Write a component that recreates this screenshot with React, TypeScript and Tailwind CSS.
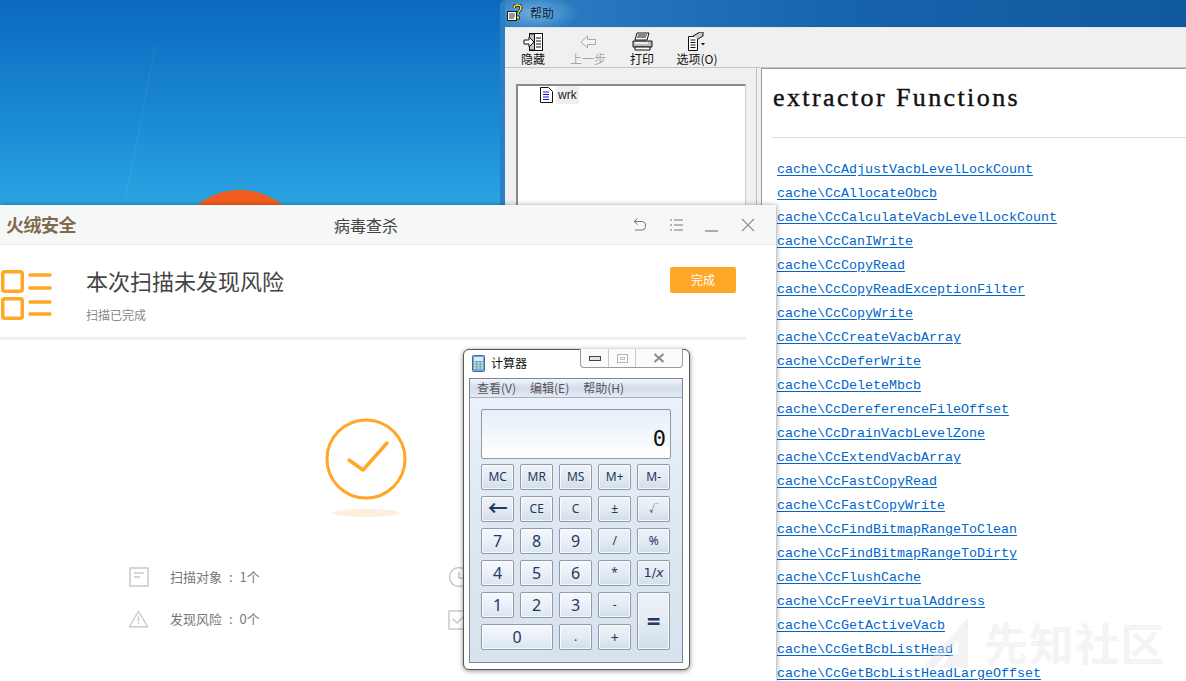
import React from "react";

const links = ["CcAdjustVacbLevelLockCount","CcAllocateObcb","CcCalculateVacbLevelLockCount","CcCanIWrite","CcCopyRead","CcCopyReadExceptionFilter","CcCopyWrite","CcCreateVacbArray","CcDeferWrite","CcDeleteMbcb","CcDereferenceFileOffset","CcDrainVacbLevelZone","CcExtendVacbArray","CcFastCopyRead","CcFastCopyWrite","CcFindBitmapRangeToClean","CcFindBitmapRangeToDirty","CcFlushCache","CcFreeVirtualAddress","CcGetActiveVacb","CcGetBcbListHead","CcGetBcbListHeadLargeOffset"];

const cjk = "font-['Noto_Sans_CJK_SC','Noto_Sans',sans-serif]";

function ToolBtn({ label, disabled, children, w }: { label: string; disabled?: boolean; children: React.ReactNode; w: string }) {
  return (
    <div className={`flex flex-col items-center ${w}`}>
      <div className="h-[19px] flex items-center justify-center">{children}</div>
      <span className={`text-[12px] leading-[15px] ${disabled ? "text-[#a8a8a8]" : "text-[#111]"}`}>{label}</span>
    </div>
  );
}

function HelpWindow() {
  return (
    <div className={`absolute left-[500px] top-0 right-0 h-[300px] flex flex-col rounded-tl-md bg-gradient-to-r from-[#2c7fc4] via-[#1763ac] to-[#11599f] pl-[5px] ${cjk}`}>
      <div className="h-[27px] flex items-center gap-[6px] pl-[1px] pb-[2px] shrink-0 bg-[radial-gradient(ellipse_45px_18px_at_30px_13px,rgba(170,215,245,0.55),transparent)]">
        <svg width="18" height="18" viewBox="0 0 18 18">
          <path d="M1.500 7.500h9v9h-9z" fill="#fff" stroke="#111" />
          <path d="M3 10h6M3 12h6M3 14h5" stroke="#333" />
          <path d="M8 4c0-4 7-4 7 0 0 3-3 2.500-3 6" fill="none" stroke="#111" strokeWidth="3" />
          <path d="M8 4c0-4 7-4 7 0 0 3-3 2.500-3 6" fill="none" stroke="#f7ea2a" strokeWidth="1.500" />
          <rect x="10.500" y="12" width="3" height="3" fill="#f7ea2a" stroke="#111" strokeWidth="0.700" />
        </svg>
        <span className="text-[12px] text-[#10243c]">帮助</span>
      </div>
      <div className="flex-1 flex flex-col bg-[#f0f0f0] min-h-0">
        <div className="h-[41px] shrink-0 border-b border-[#c4c4c4] flex items-start pt-[4px] pl-[7px] border-t border-t-[#dfe8f0]">
          <ToolBtn label="隐藏" w="w-[42px]">
            <svg width="20" height="18" viewBox="0 0 20 18">
              <rect x="6.500" y="0.500" width="13" height="17" fill="#fff" stroke="#111" />
              <rect x="6.500" y="1" width="5" height="16" fill="#c2c2c2" stroke="#111" />
              <path d="M13 5h5M13 8h5M13 11h5M13 14h5" stroke="#111" />
              <path d="M1 7h5V4l5 5-5 5v-3H1z" fill="#fff" stroke="#111" />
            </svg>
          </ToolBtn>
          <ToolBtn label="上一步" disabled w="w-[68px]">
            <svg width="17" height="14" viewBox="0 0 17 14"><path d="M7.500 1 1 7l6.500 6V9.500h8v-5h-8z" fill="#f4f4f4" stroke="#a8a8a8" /></svg>
          </ToolBtn>
          <ToolBtn label="打印" w="w-[40px]">
            <svg width="21" height="19" viewBox="0 0 21 19">
              <path d="M5 1h12l-2 7H3z" fill="#fff" stroke="#111" />
              <path d="M6 3h9M5 5h9" stroke="#111" />
              <path d="M1 9h19v6H1z" fill="#bdbdbd" stroke="#111" />
              <path d="M3 15h15v3H3z" fill="#fff" stroke="#111" />
              <path d="M3 11h13" stroke="#fff" strokeWidth="1.500" />
            </svg>
          </ToolBtn>
          <ToolBtn label="选项(O)" w="w-[70px]">
            <svg width="20" height="19" viewBox="0 0 20 19">
              <path d="M1.500 4.500h9v14h-9z" fill="#fff" stroke="#111" />
              <path d="M3.500 8h5M3.500 10.500h5M3.500 13h5M3.500 15.500h5" stroke="#111" />
              <path d="M6 4 13 0h3v4l-5 3" fill="#ccc" stroke="#111" />
              <path d="m14 11 4 0-2 2.500z" fill="#111" />
            </svg>
          </ToolBtn>
        </div>
        <div className="flex-1 flex min-h-0">
          <div className="w-[251px] shrink-0 pt-[16px] pl-[11px] pr-[10px]">
            <div className="h-full bg-white border-t-2 border-l-2 border-r border-t-[#8a8a8a] border-l-[#8a8a8a] border-r-[#cfcfcf] pl-[22px] flex items-start gap-[3px]">
              <svg width="13" height="16" viewBox="0 0 13 16" className="mt-[1px]">
                <path d="M.5.500h8l4 4v11H.500z" fill="#fff" stroke="#111" />
                <path d="M3 5h6M3 7.500h6M3 10h6M3 12.500h6" stroke="#1616c8" />
              </svg>
              <span className="bg-[#efefef] px-[2px] text-[12px] leading-[18px] text-[#222] font-['Liberation_Sans',sans-serif]">wrk</span>
            </div>
          </div>
          <div className="w-[5px] shrink-0 border-l border-[#bdbdbd]" />
          <div className="flex-1 bg-white border-l border-t border-[#9a9a9a]" />
        </div>
      </div>
    </div>
  );
}

function Article() {
  return (
    <div className="absolute left-[762px] top-[69px] right-0 bottom-0 bg-white overflow-hidden pl-[10px] font-['Liberation_Mono',monospace]">
      <h1 className="h-[69px] pt-[15px] pl-[1px] text-[26px] leading-[28px] font-normal tracking-[2.400px] [-webkit-text-stroke:0.4px_#111] text-[#111] border-b border-[#d0dcf0] font-['Liberation_Serif',serif]">extractor Functions</h1>
      <ul className="pt-[20px] pl-[5px]">
        {links.map((l) => (
          <li key={l} className="h-[24px] text-[13.33px] leading-[24px]">
            <span className="text-[#0066cc] underline underline-offset-2">{"cache\\" + l}</span>
          </li>
        ))}
      </ul>
    </div>
  );
}

function Watermark() {
  return (
    <div className={`absolute left-[920px] top-[615px] flex items-center gap-[14px] opacity-40 pointer-events-none ${cjk}`}>
      <svg width="50" height="54" viewBox="0 0 50 54"><path d="M48 3v50H22l8-14h8V26L14 53H2z" fill="#e2e2e2" /></svg>
      <span className="text-[44px] leading-[54px] font-bold tracking-[1.500px] text-[#e4e4e4]">先知社区</span>
    </div>
  );
}

function StatRow({ icon, text }: { icon: React.ReactNode; text: string }) {
  return (
    <div className="flex items-center h-[22px] gap-[21px]">
      <div className="w-[21px] flex justify-center">{icon}</div>
      <span className="text-[13px] text-[#777] [word-spacing:4px]">{text}</span>
    </div>
  );
}

function ScanWindow() {
  return (
    <div className={`absolute left-0 top-[205px] w-[776px] h-[476px] bg-white shadow-[1px_0_5px_rgba(0,0,0,0.35)] flex flex-col ${cjk}`}>
      <header className="h-[40px] shrink-0 bg-[#f6f8f7] border-b border-[#ececec] flex items-center relative">
        <span className="pl-[6px] text-[18px] font-bold text-[#7f6b4c] tracking-[-0.500px]">火绒安全</span>
        <span className="absolute left-[334px] text-[16px] text-[#444]">病毒查杀</span>
        <div className="ml-auto flex items-center gap-[20px] pr-[20px]">
          <svg width="16" height="16" viewBox="0 0 16 16" fill="none" stroke="#777" strokeWidth="1">
            <path d="M5.500 1.500 2 4.500l3.500 3" /><path d="M2.500 4.500H10a3.500 3.500 0 0 1 3.500 3.500v1.500A3.500 3.500 0 0 1 10 13H3" />
          </svg>
          <svg width="16" height="16" viewBox="0 0 16 16" fill="none" stroke="#777" strokeWidth="1">
            <path d="M2 3h2M6 3h9M2 8h2M6 8h9M2 13h2M6 13h9" />
          </svg>
          <svg width="16" height="16" viewBox="0 0 16 16" fill="none" stroke="#777" strokeWidth="1.200"><path d="M1 14h13" /></svg>
          <svg width="16" height="16" viewBox="0 0 16 16" fill="none" stroke="#9a8f8f" strokeWidth="1.200"><path d="m2 2 12 12M14 2 2 14" /></svg>
        </div>
      </header>
      <section className="h-[95px] shrink-0 w-[746px] border-b-[3px] border-[#f0f0f0] flex relative">
        <svg width="54" height="52" viewBox="0 0 54 52" className="mt-[25px] shrink-0" fill="none" stroke="#ffa726">
          <rect x="2.750" y="1.750" width="19.500" height="19.500" rx="2" strokeWidth="3.500" />
          <rect x="2.750" y="28.750" width="19.500" height="19.500" rx="2" strokeWidth="3.500" />
          <path d="M30 5h20M30 18h20M30 32h20M30 44h20" strokeWidth="3.500" strokeLinecap="round" />
        </svg>
        <div className="ml-[32px] pt-[19px]">
          <h2 className="text-[22px] leading-[32px] font-normal text-[#444]">本次扫描未发现风险</h2>
          <p className="text-[12px] leading-[18px] mt-[10px] text-[#888]">扫描已完成</p>
        </div>
        <button className="absolute left-[670px] top-[22px] w-[66px] h-[26px] bg-[#ffa726] rounded-[2px] text-[12px] text-white">完成</button>
      </section>
      <div className="flex flex-col items-center w-[732px] pt-[77px]">
        <svg width="84" height="84" viewBox="0 0 84 84" fill="none" stroke="#ffa726">
          <circle cx="42" cy="42" r="39" strokeWidth="3" />
          <path d="M25 43l14 10 24-27" strokeWidth="3.500" strokeLinecap="round" strokeLinejoin="round" />
        </svg>
        <div className="w-[68px] h-[8px] mt-[8px] rounded-[50%] bg-[#fdeedd]" />
      </div>
      <div className="pl-[128px] pt-[49px] flex flex-col gap-[20px]">
        <StatRow text="扫描对象 : 1个" icon={
          <svg width="20" height="20" viewBox="0 0 20 20" fill="none" stroke="#c9c9c9" strokeWidth="1.500"><rect x="1" y="1" width="18" height="18" /><path d="M5 6h10M5 10h6" /></svg>
        } />
        <StatRow text="发现风险 : 0个" icon={
          <svg width="23" height="20" viewBox="0 0 23 20" fill="none" stroke="#c9c9c9" strokeWidth="1.500"><path d="M11.500 1.500 1.500 18.500h20z" strokeLinejoin="round" /><path d="M11.500 7v6M11.500 14.500v1.500" /></svg>
        } />
      </div>
      <svg width="24" height="20" viewBox="0 0 24 20" fill="none" stroke="#c9c9c9" strokeWidth="1.500" className="absolute left-[448px] top-[362px]"><circle cx="11" cy="10" r="9.500" /><path d="M11 5v6h5" /></svg>
      <svg width="24" height="20" viewBox="0 0 24 20" fill="none" stroke="#c9c9c9" strokeWidth="1.500" className="absolute left-[448px] top-[405px]"><rect x="1" y="1" width="18" height="18" /><path d="m5 9 4 4 7-7" /></svg>
    </div>
  );
}

type Key = { t: string; cls?: string; light?: boolean; text?: string };
const keys: Key[] = [
  { t: "MC", text: "text-[12px]" }, { t: "MR", text: "text-[12px]" }, { t: "MS", text: "text-[12px]" }, { t: "M+", text: "text-[12px]" }, { t: "M-", text: "text-[12px]" },
  { t: "←", text: "text-[20px] font-bold" }, { t: "CE", text: "text-[12px]" }, { t: "C", text: "text-[12px]" }, { t: "±", text: "text-[12px]" }, { t: "√", text: "text-[9px]" },
  { t: "7", light: true }, { t: "8", light: true }, { t: "9", light: true }, { t: "/", text: "text-[12px]" }, { t: "%", text: "text-[12px]" },
  { t: "4", light: true }, { t: "5", light: true }, { t: "6", light: true }, { t: "*", text: "text-[12px]" }, { t: "1/x", text: "text-[13px] font-['DejaVu_Sans',sans-serif]" },
  { t: "1", light: true }, { t: "2", light: true }, { t: "3", light: true }, { t: "-", text: "text-[12px]" }, { t: "=", cls: "row-span-2", text: "text-[24px] font-bold" },
  { t: "0", cls: "col-span-2", light: true }, { t: ".", text: "text-[12px]" }, { t: "+", text: "text-[14px]" },
];

function Calculator() {
  return (
    <div className="absolute left-[463px] top-[349px] w-[227px] h-[321px] bg-white rounded-[6px] border border-[#555] shadow-[0_1px_5px_rgba(0,0,0,0.45)] flex flex-col font-['Noto_Sans','Noto_Sans_CJK_SC',sans-serif]">
      <div className="h-[28px] shrink-0 relative flex items-center pl-[8px] gap-[6px] pb-[2px]">
        <svg width="13" height="17" viewBox="0 0 13 17">
          <rect x="0.500" y="0.500" width="12" height="16" rx="1" fill="#6fa9dd" stroke="#3c6ea0" />
          <rect x="2" y="2" width="9" height="4" fill="#d9ecfb" />
          <path d="M2 8h2M5.500 8h2M9 8h2M2 10.500h2M5.500 10.500h2M9 10.500h2M2 13h2M5.500 13h2M9 13h2" stroke="#f4e5a6" strokeWidth="1.500" />
        </svg>
        <span className="text-[12px] text-[#111] font-['Noto_Sans_CJK_SC',sans-serif]">计算器</span>
        <div className="absolute left-[116px] top-[-1px] w-[103px] h-[19px] border border-t-0 border-[#9a9a9a] rounded-b-[4px] flex bg-[#fbfbfb]">
          <div className="w-[28px] border-r border-[#c8c8c8] flex items-center justify-center"><div className="w-[12px] h-[5px] border border-[#444] bg-[#dfe6ee]" /></div>
          <div className="w-[27px] border-r border-[#c8c8c8] flex items-center justify-center"><div className="w-[11px] h-[9px] border border-[#b5b5b5]"><div className="w-[5px] h-[3px] border border-[#c5c5c5] mx-auto mt-[2px]" /></div></div>
          <div className="flex-1 flex items-center justify-center">
            <svg width="12" height="10" viewBox="0 0 12 10" stroke="#8d8d8d" strokeWidth="2.200"><path d="m1.500 1 9 8M10.500 1l-9 8" /></svg>
          </div>
        </div>
      </div>
      <div className="ml-[5px] mr-[6px] flex-1 mb-[6px] border border-[#7a8794] bg-gradient-to-b from-[#edf3fb] via-[#dfe8f2] to-[#d6e2ee] flex flex-col">
        <div className="h-[19px] shrink-0 border-b border-[#a5b2c2] bg-gradient-to-b from-[#f2f5fb] via-[#d4dcec] to-[#e4e9f4] flex items-center gap-[14px] pl-[7px] text-[12px] text-[#555] font-['Noto_Sans_CJK_SC',sans-serif]">
          <span>查看(V)</span><span>编辑(E)</span><span>帮助(H)</span>
        </div>
        <div className="px-[11px] pt-[11px]">
          <div className="h-[50px] rounded-[2px] border border-[#8e9aa8] bg-gradient-to-b from-[#e6eef9] to-white flex items-end justify-end pr-[4px] pb-[6px] mb-[5px] text-[22px] leading-[26px] text-[#111] font-['DejaVu_Sans_Mono',monospace]">0</div>
          <div className="grid grid-cols-[repeat(5,33.400px)] auto-rows-[26px] gap-x-[5.600px] gap-y-[6px]">
            {keys.map((k) => (
              <div key={k.t} className={`flex items-center justify-center rounded-[2px] border border-[#8f9ba9] shadow-[inset_0_0_0_1px_rgba(255,255,255,0.75)] text-[#23395b] ${k.cls ?? ""} ${k.text ?? "text-[16px]"} ${k.light ? "bg-gradient-to-b from-[#f6f9fd] via-[#eaf0f8] to-[#dce6f1]" : "bg-gradient-to-b from-[#eef3f9] via-[#e4ebf3] to-[#d1deea]"}`}>
                {k.t === "1/x" ? <span>1/<i>x</i></span> : k.t}
              </div>
            ))}
          </div>
        </div>
      </div>
    </div>
  );
}

export default function App() {
  return (
    <div className="relative w-[1186px] h-[681px] overflow-hidden bg-[linear-gradient(#0c69bd_0,#1a8ad6_120px,#2aa4e2_205px)]">
      <svg width="500" height="205" className="absolute left-0 top-0" viewBox="0 0 500 205">
        <path d="M155 45 Q140 130 125 200" fill="none" stroke="#ffffff" strokeOpacity="0.05" strokeWidth="1.500" />
        <circle cx="240" cy="258" r="68" fill="#f25c1c" />
      </svg>
      <HelpWindow />
      <Article />
      <ScanWindow />
      <Watermark />
      <Calculator />
    </div>
  );
}
